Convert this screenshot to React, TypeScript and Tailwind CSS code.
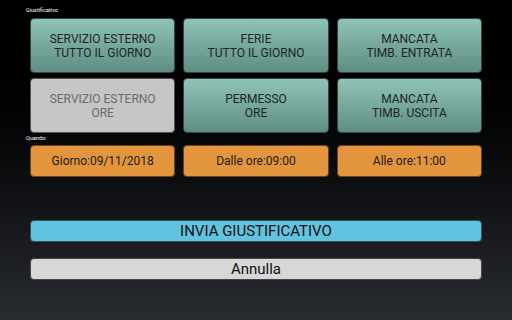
const tealBtn =
  "h-[55px] rounded-[4px] border border-[#2f4a44] bg-gradient-to-b from-[#90c3b8] to-[#5f8d83] flex flex-col items-center justify-center text-[12px] leading-[14px] text-[#1c2624]";

const orangeBtn =
  "h-[32px] rounded-[4px] border border-[#6a4216] bg-[#e2953d] flex items-center justify-center text-[12px] text-[#1d1a16]";

function Tile({ lines, disabled }: { lines: string[]; disabled?: boolean }) {
  if (disabled) {
    return (
      <button
        type="button"
        className="h-[55px] rounded-[4px] border border-[#555] bg-[#c6c6c6] flex flex-col items-center justify-center text-[12px] leading-[14px] text-[#6b6b6b]"
      >
        {lines.map((l) => (
          <span key={l}>{l}</span>
        ))}
      </button>
    );
  }
  return (
    <button type="button" className={tealBtn}>
      {lines.map((l) => (
        <span key={l}>{l}</span>
      ))}
    </button>
  );
}

export default function App() {
  return (
    <div
      className="w-[512px] h-[320px] overflow-hidden bg-gradient-to-b from-[#000000] to-[#292c31] flex flex-col"
      style={{ fontFamily: "Roboto, 'Noto Sans', sans-serif" }}
    >
      <div className="pl-[26px] pt-[7px] h-[18px] text-[5.5px] leading-[7px] text-white">
        Giustificativo
      </div>
      <div className="px-[30px] grid grid-cols-3 gap-x-[8px] gap-y-[5px]">
        <Tile lines={["SERVIZIO ESTERNO", "TUTTO IL GIORNO"]} />
        <Tile lines={["FERIE", "TUTTO IL GIORNO"]} />
        <Tile lines={["MANCATA", "TIMB. ENTRATA"]} />
        <Tile lines={["SERVIZIO ESTERNO", "ORE"]} disabled />
        <Tile lines={["PERMESSO", "ORE"]} />
        <Tile lines={["MANCATA", "TIMB. USCITA"]} />
      </div>
      <div className="pl-[26px] pt-[2px] h-[12px] text-[5.5px] leading-[7px] text-white">
        Quando:
      </div>
      <div className="px-[30px] grid grid-cols-3 gap-x-[8px]">
        <button type="button" className={orangeBtn}>
          Giorno:09/11/2018
        </button>
        <button type="button" className={orangeBtn}>
          Dalle ore:09:00
        </button>
        <button type="button" className={orangeBtn}>
          Alle ore:11:00
        </button>
      </div>
      <div className="px-[30px] mt-[43px] flex flex-col gap-[16px]">
        <button
          type="button"
          className="h-[22px] rounded-[4px] border border-[#2a5560] bg-[#62c3de] text-[15px] text-[#111] flex items-center justify-center"
        >
          INVIA GIUSTIFICATIVO
        </button>
        <button
          type="button"
          className="h-[22px] rounded-[4px] border border-[#444] bg-[#d6d7d6] text-[15px] text-[#111] flex items-center justify-center"
        >
          Annulla
        </button>
      </div>
    </div>
  );
}
